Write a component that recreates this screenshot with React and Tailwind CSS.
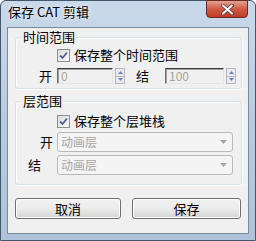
import React from "react";

const font = { fontFamily: '"Noto Sans CJK SC", "Microsoft YaHei", sans-serif' };

function CheckBox() {
  return (
    <span className="w-[13px] h-[13px] border border-[#8e8f8f] bg-gradient-to-br from-[#dcdcdc] to-[#fbfbfb] flex items-center justify-center shrink-0">
      <svg width="9" height="9" viewBox="0 0 9 9">
        <path d="M1 4.5 L3.5 7 L8 1.5" fill="none" stroke="#4a5f97" strokeWidth="1.8" />
      </svg>
    </span>
  );
}

function Spinner() {
  return (
    <div className="w-[10px] h-[16px] flex flex-col border border-[#b5b5b5] bg-[#e8ecf2] ml-[2px]">
      <div className="flex-1 flex items-center justify-center border-b border-[#b5b5b5]">
        <svg width="5" height="3" viewBox="0 0 5 3">
          <path d="M0 3 L2.5 0 L5 3 Z" fill="#6b7fb1" />
        </svg>
      </div>
      <div className="flex-1 flex items-center justify-center">
        <svg width="5" height="3" viewBox="0 0 5 3">
          <path d="M0 0 L2.5 3 L5 0 Z" fill="#6b7fb1" />
        </svg>
      </div>
    </div>
  );
}

function NumInput({ value, width }) {
  return (
    <div
      className="h-[16px] border border-t-[#3c3c3c] border-l-[#6d6d6d] border-r-[#e3e3e3] border-b-[#e3e3e3] bg-[#f0f0f0] shadow-[inset_1px_1px_0_#a0a0a0] text-[12px] leading-[14px] text-[#a8a29a] pl-[3px]"
      style={{ width }}
    >
      {value}
    </div>
  );
}

function Combo() {
  return (
    <div className="w-[176px] h-[20px] border border-[#b9b9b9] rounded-[3px] bg-[#f4f4f4] flex items-center justify-between pl-[3px] pr-[5px]">
      <span className="text-[12px] text-[#a6a6a6] leading-[14px]">动画层</span>
      <svg width="7" height="4" viewBox="0 0 7 4">
        <path d="M0 0 L7 0 L3.5 4 Z" fill="#a4a4a4" />
      </svg>
    </div>
  );
}

function Group({ title, height, children }) {
  return (
    <div
      className="relative w-[227px] border border-[#d5dfe5] rounded-[3px] shadow-[inset_1px_1px_0_#fff,1px_1px_0_#fff]"
      style={{ height }}
    >
      <span className="absolute left-[6px] top-[-8px] px-[1px] bg-[#f0f0f0] text-[13px] leading-[14px] text-black">
        {title}
      </span>
      {children}
    </div>
  );
}

export default function App() {
  return (
    <div
      className="w-[256px] h-[241px] border border-[#44566b] rounded-t-[6px] bg-gradient-to-b from-[#c9d9ea] via-[#b7cbe0] to-[#aec3da] flex flex-col"
      style={font}
    >
      <div className="h-[26px] flex items-start justify-between shrink-0">
        <span className="ml-[7px] mt-[4px] text-[13px] leading-[14px] text-black [text-shadow:0_0_4px_#ffffff]">
          保存 CAT 剪辑
        </span>
        <div className="mr-[7px] mt-[-1px] w-[42px] h-[18px] rounded-b-[4px] border border-[#6b2a22] bg-gradient-to-b from-[#e3a191] via-[#cf5a45] to-[#c03a24] flex items-center justify-center">
          <svg width="13" height="11" viewBox="0 0 13 11">
            <path d="M2 1.5 L11 9.5 M11 1.5 L2 9.5" stroke="#4a3a3a" strokeWidth="3.6" strokeLinecap="round" />
            <path d="M2 1.5 L11 9.5 M11 1.5 L2 9.5" stroke="#ffffff" strokeWidth="2" strokeLinecap="round" />
          </svg>
        </div>
      </div>

      <div className="mx-[6px] h-[207px] border border-[#7b8a9b] bg-[#f0f0f0] flex flex-col pl-[7px] pt-[9px]">
        <Group title="时间范围" height={52}>
          <div className="flex items-center pl-[41px] pt-[10px] gap-[4px]">
            <CheckBox />
            <span className="text-[13px] leading-[14px] text-black">保存整个时间范围</span>
          </div>
          <div className="flex items-center mt-[6px] h-[16px]">
            <span className="ml-[23px] w-[12px] text-[13px] leading-[14px] text-black">开</span>
            <div className="ml-[6px] flex">
              <NumInput value="0" width={56} />
              <Spinner />
            </div>
            <span className="ml-[11px] w-[12px] text-[13px] leading-[14px] text-black">结</span>
            <div className="ml-[17px] flex">
              <NumInput value="100" width={59} />
              <Spinner />
            </div>
          </div>
        </Group>

        <div className="h-[12px] shrink-0" />

        <Group title="层范围" height={84}>
          <div className="flex items-center pl-[41px] pt-[12px] gap-[4px]">
            <CheckBox />
            <span className="text-[13px] leading-[14px] text-black">保存整个层堆栈</span>
          </div>
          <div className="flex items-center mt-[4px]">
            <span className="ml-[24px] w-[12px] text-[13px] leading-[14px] text-black">开</span>
            <div className="ml-[5px]">
              <Combo />
            </div>
          </div>
          <div className="flex items-center mt-[3px]">
            <span className="ml-[12px] w-[12px] text-[13px] leading-[14px] text-black">结</span>
            <div className="ml-[17px]">
              <Combo />
            </div>
          </div>
        </Group>

        <div className="flex mt-[13px] gap-[11px]">
          <button className="w-[106px] h-[21px] border border-[#707070] rounded-[3px] bg-gradient-to-b from-[#f2f2f2] via-[#ebebeb] to-[#d6d6d6] shadow-[inset_0_0_0_1px_#fcfcfc] text-[13px] leading-[14px] text-black">
            取消
          </button>
          <button className="w-[109px] h-[21px] border border-[#707070] rounded-[3px] bg-gradient-to-b from-[#f2f2f2] via-[#ebebeb] to-[#d6d6d6] shadow-[inset_0_0_0_1px_#fcfcfc] text-[13px] leading-[14px] text-black">
            保存
          </button>
        </div>
      </div>
    </div>
  );
}
